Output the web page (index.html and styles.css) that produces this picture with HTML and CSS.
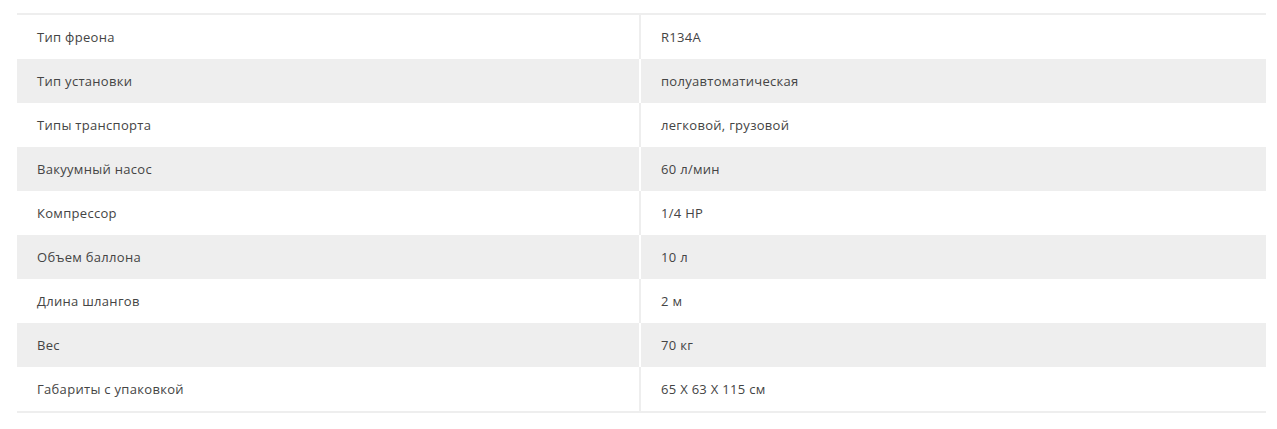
FILE: index.html
```
<!DOCTYPE html>
<html lang="ru">
<head>
<meta charset="utf-8">
<link rel="stylesheet" href="styles.css">
</head>
<body>
<div class="specs">
  <div class="row"><div class="name">Тип фреона</div><div class="val">R134A</div></div>
  <div class="row"><div class="name">Тип установки</div><div class="val">полуавтоматическая</div></div>
  <div class="row"><div class="name">Типы транспорта</div><div class="val">легковой, грузовой</div></div>
  <div class="row"><div class="name">Вакуумный насос</div><div class="val">60 л/мин</div></div>
  <div class="row"><div class="name">Компрессор</div><div class="val">1/4 HP</div></div>
  <div class="row"><div class="name">Объем баллона</div><div class="val">10 л</div></div>
  <div class="row"><div class="name">Длина шлангов</div><div class="val">2 м</div></div>
  <div class="row"><div class="name">Вес</div><div class="val">70 кг</div></div>
  <div class="row"><div class="name">Габариты с упаковкой</div><div class="val">65 X 63 X 115 см</div></div>
</div>
</body>
</html>
```
FILE: styles.css
```
html, body {
  margin: 0;
  padding: 0;
  background: #fff;
}
body {
  padding: 13px 11px 0 17px;
  font-family: "Open Sans", "Noto Sans", sans-serif;
  font-size: 13px;
  letter-spacing: 0.3px;
  color: #444;
}
.specs {
  width: 1249px;
  border-top: 2px solid #eeeeee;
  border-bottom: 2px solid #eeeeee;
}
.row {
  display: grid;
  grid-template-columns: 622px 2px 1fr;
  height: 44px;
  align-items: center;
  background: #fff;
}
.row::before {
  content: "";
  grid-column: 2;
  grid-row: 1;
  align-self: stretch;
  background: #eeeeee;
}
.row:nth-child(even) {
  background: #eeeeee;
}
.row:nth-child(even)::before {
  background: #fff;
}
.name {
  grid-column: 1;
  grid-row: 1;
  padding-left: 20px;
}
.val {
  grid-column: 3;
  grid-row: 1;
  padding-left: 20px;
}
```
